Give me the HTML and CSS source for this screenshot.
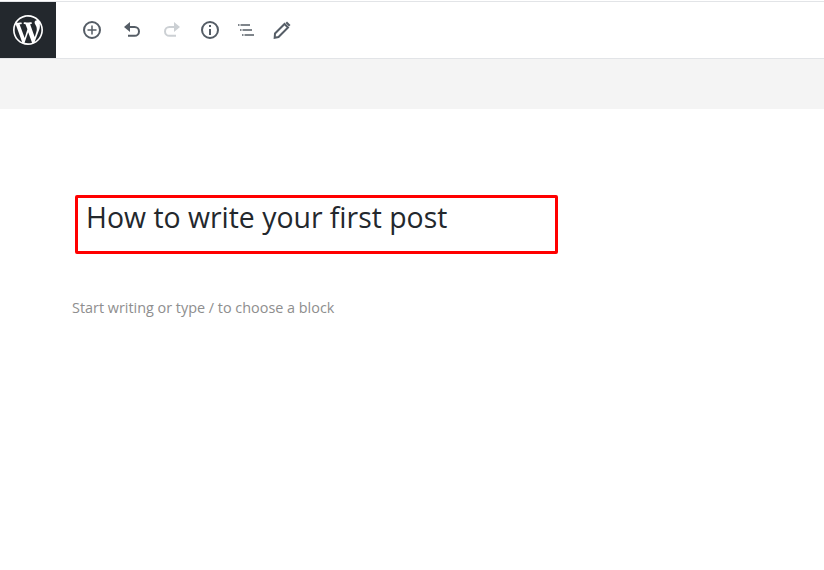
FILE: index.html
```html
<!DOCTYPE html>
<html lang="en">
<head>
<meta charset="utf-8">
<title>How to write your first post</title>
<link rel="stylesheet" href="styles.css">
</head>
<body>
<header class="toolbar">
  <a class="logo" aria-label="WordPress">
    <svg class="logo-svg" viewBox="0 0 20 20"><path d="M20 10c0-5.51-4.49-10-10-10C4.48 0 0 4.49 0 10c0 5.52 4.48 10 10 10 5.51 0 10-4.48 10-10zM7.78 15.37L4.37 6.22c.55-.02 1.17-.08 1.17-.08.5-.06.44-1.13-.06-1.11 0 0-1.45.11-2.37.11-.18 0-.37 0-.58-.01C4.12 2.69 6.87 1.11 10 1.11c2.33 0 4.45.87 6.05 2.34-.68-.11-1.65.39-1.65 1.58 0 .74.45 1.36.9 2.1.35.61.55 1.36.55 2.46 0 1.49-1.4 5-1.4 5l-3.03-8.37c.54-.02.82-.17.82-.17.5-.05.44-1.25-.06-1.22 0 0-1.44.12-2.38.12-.87 0-2.33-.12-2.33-.12-.5-.03-.56 1.2-.06 1.22l.92.08 1.26 3.41zM17.41 10c.24-.64.74-1.87.43-4.25.7 1.29 1.05 2.71 1.05 4.25 0 3.29-1.73 6.24-4.4 7.78.97-2.59 1.94-5.2 2.92-7.78zM6.1 18.09C3.12 16.65 1.11 13.53 1.11 10c0-1.3.23-2.48.72-3.59C3.25 10.3 4.67 14.2 6.1 18.09zm4.03-6.63l2.58 6.98c-.86.29-1.76.45-2.71.45-.79 0-1.57-.11-2.29-.33.81-2.38 1.62-4.74 2.42-7.1z"/></svg>
  </a>
  <nav class="tools">
    <span class="tool wide"><svg class="icon" viewBox="0 0 24 24"><circle class="line" cx="12" cy="12" r="8"/><path class="thin" d="M12 7.500v9M7.500 12h9"/></svg></span>
    <span class="tool wide"><svg class="icon" viewBox="0 0 24 24"><path class="fill" d="M4 9 10 4v10z"/><path class="line" d="M9 9h5.600a4.400 4.400 0 0 1 0 8.800H8"/></svg></span>
    <span class="tool wide off"><svg class="icon" viewBox="0 0 24 24"><path class="fill" d="M20 9 14 4v10z"/><path class="line" d="M15 9H9.400a4.400 4.400 0 0 0 0 8.800H16"/></svg></span>
    <span class="tool"><svg class="icon" viewBox="0 0 24 24"><circle class="line" cx="12" cy="12" r="8"/><path class="line" d="M12 11v6"/><path class="line" d="M12 7v2"/></svg></span>
    <span class="tool"><svg class="icon" viewBox="0 0 24 24"><path class="thin" d="M4 7h1.500M6.500 7H16M6 12h1.500M8.500 12H18M8 17h1.500M10.500 17H20"/></svg></span>
    <span class="tool"><svg class="icon" viewBox="0 0 24 24"><path class="line" d="M5 15.500 14.500 6 18 9.500 8.500 19 4.700 19.800z"/><path class="fill" d="M15.500 5 17 3.500 20.500 7 19 8.500z"/></svg></span>
  </nav>
</header>
<div class="band"></div>
<main class="editor">
  <h1 class="title-box">How to write your first post</h1>
  <p class="placeholder">Start writing or type / to choose a block</p>
</main>
</body>
</html>
```
FILE: styles.css
```css
* { box-sizing: border-box; }
html, body { margin: 0; height: 100%; }
body {
  background: #fff;
  font-family: "Open Sans", "Noto Sans", sans-serif;
  overflow: hidden;
}
.toolbar {
  display: flex;
  height: 58px;
  margin-top: 1px;
  border-top: 1px solid #e2e4e7;
  border-bottom: 1px solid #e2e4e7;
  background: #fff;
}
.logo {
  display: flex;
  align-items: center;
  justify-content: center;
  width: 56px;
  background: #23282d;
}
.logo-svg { width: 30px; height: 30px; fill: #fff; }
.tools {
  display: flex;
  align-items: center;
  margin-left: 16px;
}
.tool {
  display: flex;
  justify-content: center;
  width: 36px;
  color: #555d66;
}
.tool.wide { width: 40px; }
.tool.off { color: #ccd0d4; }
.icon { width: 24px; height: 24px; }
.line { fill: none; stroke: currentColor; stroke-width: 2; }
.thin { fill: none; stroke: currentColor; stroke-width: 1.5; }
.fill { fill: currentColor; }
.band { height: 50px; background: #f4f4f4; }
.editor { padding: 86px 0 0 72px; }
.title-box {
  width: 483px;
  height: 59px;
  margin: 0 0 0 3px;
  padding: 0 0 0 8px;
  border: 3px solid #f00;
  border-radius: 2px;
  color: #23282d;
  font-size: 28.4px;
  font-weight: 400;
  line-height: 38px;
}
.placeholder {
  margin: 42px 0 0;
  color: #8e8e8e;
  font-size: 14.4px;
  font-weight: 400;
  line-height: 24px;
}
```
